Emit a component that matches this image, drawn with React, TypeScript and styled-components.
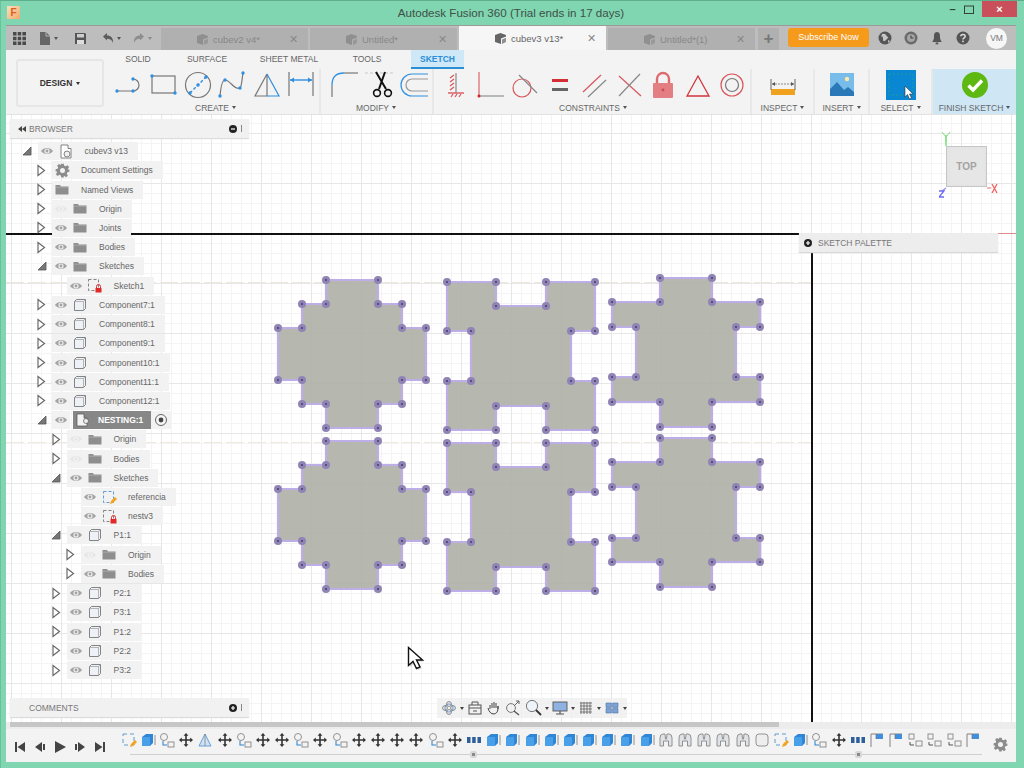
import React from 'react';
import styled, { createGlobalStyle } from 'styled-components';

const GlobalStyle = createGlobalStyle`
  html, body {
    margin: 0;
    padding: 0;
    background: #80d6b0;
  }
  * {
    box-sizing: border-box;
  }
`;

const FONT = `"Liberation Sans", Arial, sans-serif`;

const Window = styled.div`
  width: 1024px;
  height: 768px;
  overflow: hidden;
  display: flex;
  flex-direction: column;
  background: #80d6b0;
  padding: 0 8px 6px 6px;
  border-top: 1px solid #5fae8c;
  box-shadow: inset 1px 0 0 #6cc09b;
  font-family: ${FONT};
  color: #666;
`;

const TitleBar = styled.div`
  height: 24px;
  flex: none;
  display: grid;
  grid-template-columns: 1fr auto 1fr;
  align-items: center;
`;

const AppLogo = styled.div`
  width: 13px;
  height: 13px;
  margin: 0 0 2px 1px;
  background: linear-gradient(135deg, #fbe1c4, #f2a868);
  color: #d9601a;
  font: bold 10px/13px ${FONT};
  text-align: center;
`;

const AppTitle = styled.div`
  font: 11.6px/16px ${FONT};
  color: #3f4f49;
`;

const WindowControls = styled.div`
  display: flex;
  justify-content: flex-end;
  align-items: flex-start;
  height: 24px;
  margin-right: -1px;
`;

const WinButton = styled.div<{ $w: number; $close?: boolean }>`
  width: ${p => p.$w}px;
  height: 16px;
  display: flex;
  align-items: center;
  justify-content: center;
  color: ${p => (p.$close ? '#fff' : '#33413b')};
  background: ${p => (p.$close ? '#c9505a' : 'transparent')};
  font: bold 11px/16px ${FONT};
`;

const AppBar = styled.div`
  height: 25px;
  flex: none;
  display: flex;
  align-items: flex-end;
  background: #bdbdbd;
  border-top: 1px solid #9a9a9a;
`;

const QuickTools = styled.div`
  width: 155px;
  height: 24px;
  flex: none;
  display: flex;
  align-items: center;
`;

const QuickSlot = styled.div<{ $w: number; $pad: number }>`
  width: ${p => p.$w}px;
  padding-left: ${p => p.$pad}px;
  display: flex;
  align-items: center;
  gap: 3px;
`;

const Caret = styled.span<{ $c?: string }>`
  display: inline-block;
  flex: none;
  width: 0;
  height: 0;
  border-left: 2.5px solid transparent;
  border-right: 2.5px solid transparent;
  border-top: 3px solid ${p => p.$c || '#555'};
`;

const DocTab = styled.div<{ $active?: boolean }>`
  width: 147px;
  height: ${p => (p.$active ? 24 : 22)}px;
  margin-right: 2px;
  flex: none;
  display: flex;
  align-items: center;
  padding-left: 35px;
  gap: 4px;
  background: ${p => (p.$active ? '#f6f6f6' : '#b0b0b0')};
  color: ${p => (p.$active ? '#666' : '#878787')};
  font-size: 9.5px;
`;

const TabLabel = styled.span`
  flex: 1;
`;

const TabClose = styled.span`
  width: 19px;
  font-size: 11px;
  color: #888;
`;

const AddTab = styled.div`
  width: 21px;
  height: 22px;
  margin-left: 1px;
  flex: none;
  background: #b0b0b0;
  color: #777;
  font: bold 17px/21px ${FONT};
  text-align: center;
`;

const SubscribeButton = styled.div`
  width: 81px;
  height: 19px;
  margin: 0 0 3px 9px;
  flex: none;
  border-radius: 3px;
  background: #f69a1c;
  color: #fff;
  font-size: 9px;
  line-height: 19px;
  text-align: center;
`;

const AppIcons = styled.div`
  height: 24px;
  flex: 1;
  display: flex;
  align-items: center;
  padding-left: 8px;
  gap: 10px;
`;

const Avatar = styled.div`
  width: 21px;
  height: 21px;
  margin-left: 5px;
  border-radius: 50%;
  background: #f6f6f6;
  color: #777;
  font-size: 8.5px;
  line-height: 21px;
  text-align: center;
`;

const Ribbon = styled.div`
  height: 65px;
  flex: none;
  display: flex;
  background: #f3f3f3;
  border-bottom: 1px solid #e2e2e2;
`;

const DesignColumn = styled.div`
  width: 102px;
  flex: none;
  padding: 9px 0 0 10px;
`;

const DesignButton = styled.div`
  width: 88px;
  height: 48px;
  display: flex;
  align-items: center;
  justify-content: center;
  gap: 4px;
  border: 2px solid #e6e6e6;
  border-radius: 3px;
  color: #333;
  font-size: 8.5px;
  font-weight: bold;
`;

const RibbonBody = styled.div`
  flex: 1;
  display: flex;
  flex-direction: column;
`;

const RibbonTabs = styled.div`
  height: 19px;
  flex: none;
  display: flex;
`;

const RibbonTab = styled.div<{ $w: number; $active?: boolean }>`
  width: ${p => p.$w}px;
  margin-left: ${p => (p.$active ? 9 : 0)}px;
  text-align: center;
  font-size: 8.5px;
  line-height: 18px;
  color: ${p => (p.$active ? '#2b8fd8' : '#666')};
  font-weight: ${p => (p.$active ? 'bold' : 'normal')};
  background: ${p => (p.$active ? '#cfe8f8' : 'transparent')};
  border-bottom: ${p => (p.$active ? '2px solid #2b8fd8' : 'none')};
`;

const RibbonGroups = styled.div`
  flex: 1;
  display: flex;
  margin-left: 4px;
`;

const Group = styled.div<{ $w: number; $pad?: number; $finish?: boolean }>`
  width: ${p => p.$w}px;
  padding-left: ${p => p.$pad || 0}px;
  flex: none;
  display: flex;
  flex-direction: column;
  border-right: ${p => (p.$finish ? 'none' : '2px solid #e8e8e8')};
  background: ${p => (p.$finish ? '#cfe6f5' : 'transparent')};
`;

const ToolRow = styled.div`
  height: 32px;
  display: flex;
`;

const Tool = styled.div<{ $w: number }>`
  width: ${p => p.$w}px;
  flex: none;
  display: flex;
  justify-content: center;
`;

const GroupLabel = styled.div<{ $shift?: number }>`
  margin-left: ${p => p.$shift || 0}px;
  display: flex;
  align-items: center;
  justify-content: center;
  gap: 3px;
  height: 13px;
  font-size: 8.5px;
  color: #666;
`;

const Canvas = styled.div`
  position: relative;
  flex: 1;
  overflow: hidden;
  background-color: #fff;
  background-image:
    linear-gradient(#e7e7e7 1px, transparent 1px),
    linear-gradient(90deg, #e7e7e7 1px, transparent 1px),
    linear-gradient(#f4f4f4 1px, transparent 1px),
    linear-gradient(90deg, #f4f4f4 1px, transparent 1px);
  background-size: 50px 50px, 50px 50px, 10px 10px, 10px 10px;
  background-position: 0 18px, 5px 0, 0 8px, 5px 0;
`;

const SketchLayer = styled.svg`
  position: absolute;
  inset: 0;
  width: 1010px;
  height: 607px;
`;

const BrowserPanel = styled.div`
  position: absolute;
  left: 4px;
  top: 4px;
  bottom: 5px;
  width: 239px;
  display: flex;
  flex-direction: column;
`;

const PanelHeader = styled.div`
  height: 19px;
  flex: none;
  display: flex;
  align-items: center;
  padding-left: 8px;
  background: #f1f1f1;
  box-shadow: 0 1px 1px #dcdcdc;
  font-size: 8.5px;
  color: #777;
`;

const PanelTitle = styled.span<{ $pad: number }>`
  flex: 1;
  padding-left: ${p => p.$pad}px;
`;

const PanelGrip = styled.span`
  width: 8px;
  margin-left: 4px;
  border-left: 1px solid #888;
  height: 7px;
`;

const Tree = styled.div`
  flex: 1;
  margin-left: -4px;
  padding-top: 3.5px;
`;

const TreeRow = styled.div<{ $level: number }>`
  height: 19.22px;
  display: flex;
  align-items: center;
  padding-left: ${p => 10.5 + 14.5 * p.$level}px;
`;

const ArrowSlot = styled.div`
  width: 21px;
  flex: none;
  display: flex;
  justify-content: center;
`;

const Chip = styled.div`
  height: 18px;
  display: flex;
  align-items: center;
  background: #f2f2f2;
  font-size: 8.5px;
  color: #666;
`;

const EyeSlot = styled.div`
  width: 18px;
  flex: none;
  display: flex;
  justify-content: center;
`;

const IconSlot = styled.div`
  width: 20px;
  flex: none;
  display: flex;
  justify-content: center;
`;

const TreeLabel = styled.span`
  padding: 0 10px 0 9px;
  white-space: nowrap;
`;

const ActiveBlock = styled.div`
  height: 18px;
  margin-left: 3px;
  width: 78px;
  display: flex;
  align-items: center;
  background: #878787;
  color: #fff;
  font-size: 8.5px;
  font-weight: bold;
`;

const ActiveLabel = styled.span`
  padding-left: 5px;
`;

const PalettePanel = styled.div`
  position: absolute;
  left: 793px;
  top: 118px;
  width: 199px;
  height: 19px;
  display: flex;
  align-items: center;
  gap: 6px;
  padding-left: 5px;
  background: #ededed;
  box-shadow: 0 1px 1px #d8d8d8;
  font-size: 8.5px;
  color: #777;
`;

const AxisLine = styled.div`
  position: absolute;
  background: #111;
`;

const HAxisBlack = styled(AxisLine)`
  left: 0;
  top: 118px;
  width: 805px;
  height: 2px;
`;

const HAxisRed = styled(AxisLine)`
  left: 805px;
  right: 0;
  top: 118px;
  height: 1px;
  background: #d98b8b;
`;

const VAxisBlack = styled(AxisLine)`
  left: 805px;
  top: 118px;
  bottom: 0;
  width: 2px;
`;

const DashLine = styled.div<{ $top: number }>`
  position: absolute;
  left: 0;
  width: 805px;
  top: ${p => p.$top}px;
  height: 1px;
  background: repeating-linear-gradient(90deg, #efe8dc 0 18px, transparent 18px 22px);
`;

const ViewCube = styled.div`
  position: absolute;
  left: 940px;
  top: 31px;
  width: 41px;
  height: 41px;
  display: flex;
  align-items: center;
  justify-content: center;
  background: #e6e6e6;
  border: 1px solid #c6c6c6;
  box-shadow: 0 0 3px #ddd inset;
  font-size: 10px;
  font-weight: bold;
  color: #a3a3a3;
`;

const CubeAxes = styled.svg`
  position: absolute;
  left: 933px;
  top: 16px;
`;

const NavBar = styled.div`
  position: absolute;
  left: 431px;
  bottom: 4px;
  width: 190px;
  height: 20px;
  display: flex;
  align-items: center;
  padding-left: 4px;
  gap: 3px;
  background: rgba(238, 238, 238, 0.75);
`;

const MouseCursor = styled.svg`
  position: absolute;
  left: 401px;
  top: 531px;
`;

const ScrollRow = styled.div`
  height: 7px;
  flex: none;
  padding-left: 4px;
  background: #ececec;
`;

const ScrollThumb = styled.div`
  width: 769px;
  height: 5px;
  background: #c6c6c6;
`;

const Timeline = styled.div`
  position: relative;
  height: 33px;
  flex: none;
  display: flex;
  align-items: flex-start;
  background: #f3f3f3;
`;

const Transport = styled.div`
  width: 113px;
  height: 33px;
  flex: none;
  display: flex;
  align-items: center;
  padding: 3px 0 0 7px;
  gap: 6px;
`;

const TimelineSteps = styled.div`
  display: flex;
  padding-top: 3px;
`;

const Step = styled.div`
  width: 19.2px;
  flex: none;
  display: flex;
  justify-content: center;
`;

const TrackLine = styled.div`
  position: absolute;
  left: 124px;
  right: 34px;
  top: 25px;
  height: 1px;
  background: #cfcfcf;
`;

const TrackKnob = styled.div<{ $left: number }>`
  position: absolute;
  left: ${p => p.$left}px;
  top: 22px;
  width: 7px;
  height: 7px;
  border-radius: 2px;
  background: #8a8a8a;
  border: 2px solid #d8d8d8;
`;

const TimelineGear = styled.div`
  position: absolute;
  right: 8px;
  top: 8px;
`;

const GREY = '#777';
const BLUE = '#2f8fe0';
const RED = '#d9565c';

const Dot = ({ x, y, c = BLUE }: { x: number; y: number; c?: string }) => <circle cx={x} cy={y} r={1.7} fill={c} />;

const RibbonSvg = ({ children }: { children: React.ReactNode }) => (
  <svg width={32} height={32} viewBox="0 0 32 32" fill="none">
    {children}
  </svg>
);

const ribbonIcons: Record<string, React.ReactNode> = {
  line: (
    <>
      <path d="M4 22H20A6 6 0 0 0 20 10" stroke={GREY} strokeWidth={1.2} />
      <Dot x={4} y={22} /><Dot x={20} y={22} /><Dot x={20} y={10} />
    </>
  ),
  rect: (
    <>
      <rect x={4} y={7} width={23} height={17} stroke={GREY} strokeWidth={1.2} />
      <Dot x={4} y={7} /><Dot x={27} y={24} />
    </>
  ),
  circle: (
    <>
      <circle cx={16} cy={16} r={12.5} stroke={GREY} strokeWidth={1.2} />
      <path d="M8 24L24 8" stroke={BLUE} strokeWidth={1.4} strokeDasharray="3 2" />
      <Dot x={8} y={24} /><Dot x={16} y={16} /><Dot x={24} y={8} />
    </>
  ),
  spline: (
    <>
      <path d="M4 27C5 16 7 11 9 11C14 11 19 22 24 19C26 17 26 9 27 4" stroke={GREY} strokeWidth={1.2} />
      <Dot x={4} y={27} /><Dot x={9} y={11} /><Dot x={24} y={19} /><Dot x={27} y={4} />
    </>
  ),
  triangle: (
    <>
      <path d="M16 5L4 27H16Z" stroke={GREY} strokeWidth={1.2} />
      <path d="M16 5L28 27H16" stroke={BLUE} strokeWidth={1.2} />
    </>
  ),
  dimension: (
    <>
      <path d="M4 3V27M28 3V27" stroke={GREY} strokeWidth={1.2} />
      <path d="M5 11H27" stroke={BLUE} strokeWidth={1.4} />
      <path d="M5 11L9 8.5V13.5ZM27 11L23 8.5V13.5Z" fill={BLUE} />
    </>
  ),
  fillet: (
    <>
      <path d="M2 28V16" stroke={GREY} strokeWidth={1.2} />
      <path d="M2 16Q2 4 14 4" stroke={BLUE} strokeWidth={1.3} />
      <path d="M14 4H28" stroke={GREY} strokeWidth={1.2} />
    </>
  ),
  scissors: (
    <>
      <path d="M1 4H31" stroke="#c9c9c9" strokeWidth={1} strokeDasharray="3 2" />
      <path d="M15 20L21 3M22 20L12 3" stroke="#111" strokeWidth={2} />
      <circle cx={13} cy={24} r={3.4} stroke="#111" strokeWidth={1.6} />
      <circle cx={24} cy={24} r={3.4} stroke="#111" strokeWidth={1.6} />
    </>
  ),
  offset: (
    <>
      <path d="M30 5H14A11 11 0 0 0 14 27H30" stroke={BLUE} strokeWidth={1.2} />
      <path d="M30 10H14A6 6 0 0 0 14 22H30" stroke="#999" strokeWidth={1.2} />
    </>
  ),
  fix: (
    <>
      <path d="M16 4V24" stroke="#888" strokeWidth={1.2} />
      <path d="M14 6L10 9M14 10L10 13M14 14L10 17M14 18L10 21" stroke={RED} strokeWidth={1.3} />
      <path d="M8 24H24" stroke={RED} strokeWidth={1.4} />
      <path d="M11 28L13 25M15 28L17 25M19 28L21 25" stroke={RED} strokeWidth={1.2} />
    </>
  ),
  corner: (
    <>
      <path d="M4 3V27" stroke={RED} strokeWidth={1.1} />
      <path d="M4 27H29" stroke="#888" strokeWidth={1.1} />
      <circle cx={4} cy={27} r={1.5} fill="#d42020" />
    </>
  ),
  tangent: (
    <>
      <circle cx={13} cy={19} r={9} stroke={RED} strokeWidth={1.2} />
      <path d="M10 6L28 24" stroke="#888" strokeWidth={1.2} />
    </>
  ),
  equal: (
    <>
      <rect x={8} y={10} width={16} height={3} fill="#d42e36" />
      <rect x={8} y={19} width={16} height={3} fill="#666" />
    </>
  ),
  parallel: (
    <>
      <path d="M5 23L23 6" stroke={RED} strokeWidth={1.2} />
      <path d="M10 28L28 11" stroke="#888" strokeWidth={1.2} />
    </>
  ),
  cross: (
    <>
      <path d="M6 7L28 27" stroke={RED} strokeWidth={1.2} />
      <path d="M6 27L27 5" stroke="#888" strokeWidth={1.2} />
    </>
  ),
  lock: (
    <>
      <path d="M10 15V10A6 6 0 0 1 22 10V15" stroke="#dc6a6e" strokeWidth={2.4} />
      <rect x={6} y={14} width={20} height={15} rx={1} fill="#e37f83" />
      <circle cx={16} cy={21} r={1.4} fill="#c74d52" />
    </>
  ),
  delta: <path d="M16 7L27 27H5Z" stroke="#d2353c" strokeWidth={1.3} />,
  concentric: (
    <>
      <circle cx={16} cy={16} r={11} stroke={RED} strokeWidth={1.2} />
      <circle cx={16} cy={16} r={6.5} stroke="#777" strokeWidth={1.2} />
    </>
  ),
  ruler: (
    <>
      <rect x={4} y={20} width={24} height={6} fill="#f0a21f" />
      <path d="M4 10V21M28 10V21" stroke="#666" strokeWidth={1} />
      <path d="M5 15H27" stroke="#888" strokeWidth={1} strokeDasharray="2 1" />
      <path d="M5 15L8 13V17ZM27 15L24 13V17Z" fill="#555" />
    </>
  ),
  picture: (
    <>
      <rect x={4} y={4} width={24} height={23} fill="#78bdea" />
      <circle cx={21} cy={10} r={2.2} fill="#ffe9a8" />
      <path d="M4 27V20L11 13L18 21L22 18L28 23V27Z" fill="#2a78b8" />
    </>
  ),
  select: (
    <>
      <rect x={1} y={1} width={30} height={30} fill="#0a87d2" />
      <rect x={4} y={5} width={24} height={21} stroke="#2aa188" strokeWidth={0.8} strokeDasharray="2 2" />
      <path d="M20 17V28L22.5 25.5L24.5 30L26.5 29L24.5 25H28Z" fill="#fff" stroke="#333" strokeWidth={0.6} />
    </>
  ),
  finish: (
    <>
      <circle cx={16} cy={16} r={13} fill="#5eb812" />
      <path d="M9.5 16.5L14 21L23 11.5" stroke="#fff" strokeWidth={3.4} />
    </>
  ),
};

const RibbonIcon = ({ name }: { name: string }) => <RibbonSvg>{ribbonIcons[name]}</RibbonSvg>;

const Small = ({ w = 16, h = 16, children }: { w?: number; h?: number; children: React.ReactNode }) => (
  <svg width={w} height={h} viewBox={`0 0 ${w} ${h}`} fill="none">
    {children}
  </svg>
);

const GridIcon = () => (
  <Small w={13} h={13}>
    <path d="M0 0H3.5V3.5H0ZM4.7 0H8.2V3.5H4.7ZM9.4 0H13V3.5H9.4ZM0 4.7H3.5V8.2H0ZM4.7 4.7H8.2V8.2H4.7ZM9.4 4.7H13V8.2H9.4ZM0 9.4H3.5V13H0ZM4.7 9.4H8.2V13H4.7ZM9.4 9.4H13V13H9.4Z" fill="#4a4a4a" />
  </Small>
);

const FileIcon = () => (
  <Small w={12} h={15}>
    <path d="M1 1H7L11 5V14H1Z" fill="#666" />
    <path d="M7 1V5H11" stroke="#ccc" strokeWidth={0.8} />
  </Small>
);

const SaveIcon = () => (
  <Small w={13} h={13}>
    <path d="M1 1H11L12 2V12H1Z" fill="#555" />
    <rect x={3} y={2} width={7} height={3.5} fill="#ccc" />
    <rect x={3} y={8} width={7} height={4} fill="#ddd" />
  </Small>
);

const UndoIcon = ({ flip, c }: { flip?: boolean; c: string }) => (
  <Small w={12} h={12}>
    <g transform={flip ? 'translate(12 0) scale(-1 1)' : undefined}>
      <path d="M1 4.5L5 1V3.4C9 3.4 11.5 6 11 11C10 8 8 6.8 5 6.8V8.5Z" fill={c} />
    </g>
  </Small>
);

const TabCube = ({ c }: { c: string }) => (
  <Small w={13} h={13}>
    <path d="M1 3L6.5 1L12 3V4.5L7 6.5V12L1 10Z" fill={c} />
    <path d="M8 7.5L12 5.8V10L8 12Z" fill={c} opacity={0.7} />
  </Small>
);

const GlobeIcon = () => (
  <Small>
    <circle cx={8} cy={8} r={6.5} fill="#555" />
    <path d="M5 4Q8 3 9 5T11 7T9 10T6 9T4 7Z" fill="#c6c6c6" />
    <path d="M11 10L13 11L11 13Z" fill="#c6c6c6" />
  </Small>
);

const ClockIcon = () => (
  <Small>
    <circle cx={8} cy={8} r={6.5} fill="#6a6a6a" />
    <circle cx={8} cy={8} r={4} fill="#a6a6a6" />
    <path d="M8 5.5V8H10.5" stroke="#444" strokeWidth={1.1} />
  </Small>
);

const BellIcon = () => (
  <Small>
    <path d="M8 2C5 2 5 5 5 7C5 9.5 4 11 3 12H13C12 11 11 9.5 11 7C11 5 11 2 8 2Z" fill="#555" />
    <rect x={6.7} y={12.5} width={2.6} height={1.8} fill="#555" />
  </Small>
);

const HelpIcon = () => (
  <Small>
    <circle cx={8} cy={8} r={6.5} fill="#555" />
    <path d="M5.8 6.3C5.8 3.8 10.2 3.8 10.2 6.3C10.2 8 8 7.8 8 9.6" stroke="#ddd" strokeWidth={1.5} />
    <rect x={7.2} y={10.6} width={1.6} height={1.6} fill="#ddd" />
  </Small>
);

const EyeIcon = ({ off }: { off?: boolean }) => (
  <Small w={14} h={10}>
    <path d="M1 5C3.5 1 10.5 1 13 5C10.5 9 3.5 9 1 5Z" fill={off ? '#e6e6e6' : '#a3a3a3'} />
    <circle cx={7} cy={5} r={2.6} fill={off ? '#f3f3f3' : '#eee'} />
    <circle cx={7} cy={5} r={1.4} fill={off ? '#e6e6e6' : '#a3a3a3'} />
  </Small>
);

const ClosedArrow = () => (
  <Small w={9} h={13}>
    <path d="M1 1.5L7.5 6.5L1 11.5Z" fill="#fff" stroke="#6a6a6a" strokeWidth={1.2} />
  </Small>
);

const OpenArrow = () => (
  <Small w={10} h={10}>
    <path d="M9 1V9H1Z" fill="#777" stroke="#555" strokeWidth={0.8} />
  </Small>
);

const FolderIcon = () => (
  <Small w={14} h={11}>
    <path d="M0.5 1H5L6 2.5H13.5V10.5H0.5Z" fill="#8e8e8e" />
    <path d="M0.5 3.2H13.5" stroke="#bbb" strokeWidth={0.6} />
  </Small>
);

const GearIcon = ({ size = 14, c = '#8c8c8c' }: { size?: number; c?: string }) => (
  <svg width={size} height={size} viewBox="0 0 24 24">
    <path
      fill={c}
      fillRule="evenodd"
      d="M10 1H14L14.7 4.2L17 5.2L19.8 3.4L22.6 6.2L20.8 9L21.8 11.3L23 10V14L19.8 14.7L18.8 17L20.6 19.8L17.8 22.6L15 20.8L14 21.3L14 23H10L9.3 19.8L7 18.8L4.2 20.6L1.4 17.8L3.2 15L2.2 12.7L1 14V10L4.2 9.3L5.2 7L3.4 4.2L6.2 1.4L9 3.2ZM12 8A4 4 0 1 0 12 16A4 4 0 1 0 12 8Z"
    />
  </svg>
);

const DocIcon = () => (
  <Small w={14} h={15}>
    <path d="M2 1H9V4.5H12V14H2Z" fill="#fff" stroke="#777" strokeWidth={0.9} />
    <circle cx={8} cy={10} r={3} fill="#eee" stroke="#777" strokeWidth={0.9} />
  </Small>
);

const CompIcon = () => (
  <Small w={14} h={14}>
    <path d="M3.5 1.5H12.5V10.5L10.5 12.5H1.5V3.5Z" fill="#eef1f5" stroke="#777" strokeWidth={0.9} />
    <path d="M1.5 3.5H10.5V12.5M10.5 3.5L12.5 1.5" stroke="#999" strokeWidth={0.7} />
  </Small>
);

const SketchIcon = ({ lock, edit }: { lock?: boolean; edit?: boolean }) => (
  <Small w={15} h={15}>
    <rect x={1.5} y={1.5} width={10} height={11} stroke={edit ? '#4f93cf' : '#777'} strokeWidth={0.9} strokeDasharray="3 2" />
    {lock && (
      <>
        <path d="M9.5 10V8.5A2 2 0 0 1 13.5 8.5V10" stroke="#e02a2a" strokeWidth={1} />
        <rect x={8.5} y={10} width={6} height={4.5} fill="#e02a2a" />
      </>
    )}
    {edit && <path d="M8 14L9 11L13 7L15 9L11 13Z" fill="#f2a31f" />}
  </Small>
);

const CompIconDark = () => (
  <Small w={15} h={14}>
    <path d="M1 1H8V5H11V13H1Z" fill="#f3f3f3" stroke="#555" strokeWidth={0.7} />
    <circle cx={10} cy={8} r={2.5} fill="#eee" stroke="#555" strokeWidth={0.7} />
  </Small>
);

const TargetIcon = () => (
  <Small w={14} h={14}>
    <circle cx={7} cy={7} r={5.5} stroke="#666" strokeWidth={1} fill="#f5f5f5" />
    <circle cx={7} cy={7} r={2.4} fill="#444" />
  </Small>
);

type Row = {
  level: number;
  arrow?: 'open' | 'closed';
  eye?: 'on' | 'off';
  icon: 'doc' | 'gear' | 'folder' | 'comp' | 'sketch' | 'sketchEdit' | 'nesting';
  label: string;
  active?: boolean;
};

const rows: Row[] = [
  { level: 0, arrow: 'open', eye: 'on', icon: 'doc', label: 'cubev3 v13' },
  { level: 1, arrow: 'closed', icon: 'gear', label: 'Document Settings' },
  { level: 1, arrow: 'closed', icon: 'folder', label: 'Named Views' },
  { level: 1, arrow: 'closed', eye: 'off', icon: 'folder', label: 'Origin' },
  { level: 1, arrow: 'closed', eye: 'on', icon: 'folder', label: 'Joints' },
  { level: 1, arrow: 'closed', eye: 'on', icon: 'folder', label: 'Bodies' },
  { level: 1, arrow: 'open', eye: 'on', icon: 'folder', label: 'Sketches' },
  { level: 2, eye: 'on', icon: 'sketch', label: 'Sketch1' },
  { level: 1, arrow: 'closed', eye: 'on', icon: 'comp', label: 'Component7:1' },
  { level: 1, arrow: 'closed', eye: 'on', icon: 'comp', label: 'Component8:1' },
  { level: 1, arrow: 'closed', eye: 'on', icon: 'comp', label: 'Component9:1' },
  { level: 1, arrow: 'closed', eye: 'on', icon: 'comp', label: 'Component10:1' },
  { level: 1, arrow: 'closed', eye: 'on', icon: 'comp', label: 'Component11:1' },
  { level: 1, arrow: 'closed', eye: 'on', icon: 'comp', label: 'Component12:1' },
  { level: 1, arrow: 'open', eye: 'on', icon: 'nesting', label: 'NESTING:1', active: true },
  { level: 2, arrow: 'closed', eye: 'off', icon: 'folder', label: 'Origin' },
  { level: 2, arrow: 'closed', eye: 'off', icon: 'folder', label: 'Bodies' },
  { level: 2, arrow: 'open', eye: 'on', icon: 'folder', label: 'Sketches' },
  { level: 3, eye: 'on', icon: 'sketchEdit', label: 'referencia' },
  { level: 3, eye: 'on', icon: 'sketch', label: 'nestv3' },
  { level: 2, arrow: 'open', eye: 'on', icon: 'comp', label: 'P1:1' },
  { level: 3, arrow: 'closed', eye: 'off', icon: 'folder', label: 'Origin' },
  { level: 3, arrow: 'closed', eye: 'on', icon: 'folder', label: 'Bodies' },
  { level: 2, arrow: 'closed', eye: 'on', icon: 'comp', label: 'P2:1' },
  { level: 2, arrow: 'closed', eye: 'on', icon: 'comp', label: 'P3:1' },
  { level: 2, arrow: 'closed', eye: 'on', icon: 'comp', label: 'P1:2' },
  { level: 2, arrow: 'closed', eye: 'on', icon: 'comp', label: 'P2:2' },
  { level: 2, arrow: 'closed', eye: 'on', icon: 'comp', label: 'P3:2' },
];

const rowIcon = (icon: Row['icon']) => {
  switch (icon) {
    case 'doc':
      return <DocIcon />;
    case 'gear':
      return <GearIcon size={15} />;
    case 'folder':
      return <FolderIcon />;
    case 'comp':
      return <CompIcon />;
    case 'sketch':
      return <SketchIcon lock />;
    case 'sketchEdit':
      return <SketchIcon edit />;
    case 'nesting':
      return <CompIconDark />;
  }
};

const shapeA = (x: number[], y: number[]) =>
  [
    [x[2], y[0]], [x[3], y[0]], [x[3], y[1]], [x[4], y[1]], [x[4], y[2]], [x[5], y[2]],
    [x[5], y[3]], [x[4], y[3]], [x[4], y[4]], [x[3], y[4]], [x[3], y[5]], [x[2], y[5]],
    [x[2], y[4]], [x[1], y[4]], [x[1], y[3]], [x[0], y[3]], [x[0], y[2]], [x[1], y[2]],
    [x[1], y[1]], [x[2], y[1]],
  ];

const shapeB = (x: number[], y: number[]) =>
  [
    [x[0], y[0]], [x[2], y[0]], [x[2], y[1]], [x[3], y[1]], [x[3], y[0]], [x[5], y[0]],
    [x[5], y[2]], [x[4], y[2]], [x[4], y[3]], [x[5], y[3]], [x[5], y[5]], [x[3], y[5]],
    [x[3], y[4]], [x[2], y[4]], [x[2], y[5]], [x[0], y[5]], [x[0], y[3]], [x[1], y[3]],
    [x[1], y[2]], [x[0], y[2]],
  ];

// the right hand column is the plus shape with its side arms joined to the top step
const shapeC = (x: number[], y: number[]) =>
  [
    [x[2], y[0]], [x[3], y[0]], [x[3], y[1]], [x[5], y[1]], [x[5], y[2]], [x[4], y[2]],
    [x[4], y[3]], [x[5], y[3]], [x[5], y[4]], [x[3], y[4]], [x[3], y[5]], [x[2], y[5]],
    [x[2], y[4]], [x[0], y[4]], [x[0], y[3]], [x[1], y[3]], [x[1], y[2]], [x[0], y[2]],
    [x[0], y[1]], [x[2], y[1]],
  ];

const xa = [278, 302, 326, 378, 402, 426];
const xb = [447, 471, 496, 546, 571, 595];
const xc = [612, 636, 660, 712, 736, 760];

const shapes = [
  shapeA(xa, [280, 304, 328, 380, 404, 428]),
  shapeB(xb, [282, 306, 331, 381, 406, 430]),
  shapeC(xc, [278, 302, 327, 377, 402, 427]),
  shapeA(xa, [441, 465, 489, 541, 565, 589]),
  shapeB(xb, [443, 467, 492, 542, 567, 591]),
  shapeC(xc, [438, 462, 487, 538, 562, 587]),
];

const stepIcons: Record<string, React.ReactNode> = {
  sketch: (
    <>
      <rect x={2} y={2} width={11} height={11} stroke="#4f93cf" strokeWidth={0.9} strokeDasharray="4 3" />
      <path d="M9 15L10 12L14 8L16 10L12 14Z" fill="#f2a31f" />
    </>
  ),
  box: (
    <>
      <path d="M2 5L6 2H13V11L10 14H2Z" fill="#2f86d6" />
      <path d="M2 5H10V14H2Z" fill="#4aa0e8" />
      <path d="M15 3V13" stroke="#777" strokeWidth={0.8} />
    </>
  ),
  joint: (
    <>
      <circle cx={5} cy={5} r={3.5} stroke="#888" strokeWidth={0.9} />
      <rect x={9} y={10} width={6} height={5} stroke="#888" strokeWidth={0.9} />
      <path d="M4 9V13H8" stroke="#2f86d6" strokeWidth={1.1} />
    </>
  ),
  move: (
    <path
      d="M8 1L10.4 3.8H8.8V7.2H12.2V5.6L15 8L12.2 10.4V8.8H8.8V12.2H10.4L8 15L5.6 12.2H7.2V8.8H3.8V10.4L1 8L3.8 5.6V7.2H7.2V3.8H5.6Z"
      fill="#333"
    />
  ),
  tri: (
    <>
      <path d="M8 2L2 14H14Z" fill="#cfe2f3" stroke="#5a9ad6" strokeWidth={0.9} />
      <path d="M8 2V14" stroke="#777" strokeWidth={0.7} />
    </>
  ),
  ddd: (
    <>
      <rect x={1} y={5} width={3.5} height={6} fill="#2d5f99" />
      <rect x={6.2} y={5} width={3.5} height={6} fill="#2d5f99" />
      <rect x={11.5} y={5} width={3.5} height={6} fill="#2d5f99" />
    </>
  ),
  fil: (
    <>
      <path d="M2 14V6Q2 2 5 2H7L7.5 7L8.5 7L9 2H11Q14 2 14 6V14H10.5V9H5.5V14Z" fill="#dfe2e6" stroke="#888" strokeWidth={0.9} />
    </>
  ),
  round: <rect x={2} y={2} width={12} height={12} rx={3} fill="#eeeeee" stroke="#888" strokeWidth={0.9} />,
  flag: (
    <>
      <path d="M2 15V2H14" stroke="#777" strokeWidth={0.9} />
      <rect x={7} y={2} width={7} height={5} fill="#3f8fdc" />
      <path d="M7 2V7" stroke="#777" strokeWidth={0.7} />
    </>
  ),
  joint2: (
    <>
      <rect x={2} y={2} width={5} height={5} stroke="#888" strokeWidth={0.9} />
      <rect x={9} y={9} width={6} height={5} stroke="#888" strokeWidth={0.9} />
      <path d="M3 10V13H7" stroke="#444" strokeWidth={0.9} />
    </>
  ),
};

const steps = [
  'sketch', 'box', 'joint', 'move', 'tri', 'move', 'joint', 'move', 'move', 'joint', 'move', 'joint', 'move', 'move',
  'move', 'move', 'joint', 'move', 'ddd', 'box', 'box', 'box', 'box', 'box', 'box', 'box', 'box', 'box', 'fil', 'fil',
  'fil', 'fil', 'fil', 'round', 'sketch', 'box', 'joint', 'move', 'ddd', 'flag', 'flag', 'joint2', 'joint2', 'joint2',
  'flag',
];

const TransportIcon = ({ d }: { d: string }) => (
  <Small w={14} h={14}>
    <path d={d} fill="#444" />
  </Small>
);

const App = () => (
  <Window>
    <GlobalStyle />
    <TitleBar>
      <AppLogo>F</AppLogo>
      <AppTitle>Autodesk Fusion 360 (Trial ends in 17 days)</AppTitle>
      <WindowControls>
        <WinButton $w={17}>–</WinButton>
        <WinButton $w={15}>
          <Small w={10} h={9}>
            <rect x={0.5} y={1} width={9} height={7.5} stroke="#33413b" strokeWidth={1} />
          </Small>
        </WinButton>
        <WinButton $w={6} />
        <WinButton $w={35} $close>×</WinButton>
      </WindowControls>
    </TitleBar>

    <AppBar>
      <QuickTools>
        <QuickSlot $w={26} $pad={7}><GridIcon /></QuickSlot>
        <QuickSlot $w={32} $pad={7}><FileIcon /><Caret /></QuickSlot>
        <QuickSlot $w={34} $pad={10}><SaveIcon /></QuickSlot>
        <QuickSlot $w={31} $pad={4}><UndoIcon c="#5c5c5c" /><Caret /></QuickSlot>
        <QuickSlot $w={32} $pad={4}><UndoIcon flip c="#8d8d8d" /><Caret $c="#8a8a8a" /></QuickSlot>
      </QuickTools>
      <DocTab><TabCube c="#8f8f8f" /><TabLabel>cubev2 v4*</TabLabel><TabClose>✕</TabClose></DocTab>
      <DocTab><TabCube c="#8f8f8f" /><TabLabel>Untitled*</TabLabel><TabClose>✕</TabClose></DocTab>
      <DocTab $active><TabCube c="#666" /><TabLabel>cubev3 v13*</TabLabel><TabClose>✕</TabClose></DocTab>
      <DocTab><TabCube c="#8f8f8f" /><TabLabel>Untitled*(1)</TabLabel><TabClose>✕</TabClose></DocTab>
      <AddTab>+</AddTab>
      <SubscribeButton>Subscribe Now</SubscribeButton>
      <AppIcons>
        <GlobeIcon />
        <ClockIcon />
        <BellIcon />
        <HelpIcon />
        <Avatar>VM</Avatar>
      </AppIcons>
    </AppBar>

    <Ribbon>
      <DesignColumn>
        <DesignButton>DESIGN <Caret $c="#333" /></DesignButton>
      </DesignColumn>
      <RibbonBody>
        <RibbonTabs>
          <RibbonTab $w={60}>SOLID</RibbonTab>
          <RibbonTab $w={78}>SURFACE</RibbonTab>
          <RibbonTab $w={86}>SHEET METAL</RibbonTab>
          <RibbonTab $w={70}>TOOLS</RibbonTab>
          <RibbonTab $w={53} $active>SKETCH</RibbonTab>
        </RibbonTabs>
        <RibbonGroups>
          <Group $w={209}>
            <ToolRow>
              {['line', 'rect', 'circle', 'spline', 'triangle', 'dimension'].map(n => (
                <Tool $w={34.4} key={n}><RibbonIcon name={n} /></Tool>
              ))}
            </ToolRow>
            <GroupLabel>CREATE <Caret $c="#555" /></GroupLabel>
          </Group>
          <Group $w={113} $pad={8}>
            <ToolRow>
              {['fillet', 'scissors', 'offset'].map(n => (
                <Tool $w={34} key={n}><RibbonIcon name={n} /></Tool>
              ))}
            </ToolRow>
            <GroupLabel $shift={-9}>MODIFY <Caret $c="#555" /></GroupLabel>
          </Group>
          <Group $w={318} $pad={5}>
            <ToolRow>
              {['fix', 'corner', 'tangent', 'equal', 'parallel', 'cross', 'lock', 'delta', 'concentric'].map(n => (
                <Tool $w={34.5} key={n}><RibbonIcon name={n} /></Tool>
              ))}
            </ToolRow>
            <GroupLabel $shift={-3}>CONSTRAINTS <Caret $c="#555" /></GroupLabel>
          </Group>
          <Group $w={63}>
            <ToolRow><Tool $w={61}><RibbonIcon name="ruler" /></Tool></ToolRow>
            <GroupLabel>INSPECT <Caret $c="#555" /></GroupLabel>
          </Group>
          <Group $w={55}>
            <ToolRow><Tool $w={53}><RibbonIcon name="picture" /></Tool></ToolRow>
            <GroupLabel>INSERT <Caret $c="#555" /></GroupLabel>
          </Group>
          <Group $w={63}>
            <ToolRow><Tool $w={61}><RibbonIcon name="select" /></Tool></ToolRow>
            <GroupLabel>SELECT <Caret $c="#555" /></GroupLabel>
          </Group>
          <Group $w={83} $finish>
            <ToolRow><Tool $w={83}><RibbonIcon name="finish" /></Tool></ToolRow>
            <GroupLabel>FINISH SKETCH <Caret $c="#555" /></GroupLabel>
          </Group>
        </RibbonGroups>
      </RibbonBody>
    </Ribbon>

    <Canvas>
      <DashLine $top={167} />
      <DashLine $top={327} />
      <HAxisBlack />
      <HAxisRed />
      <VAxisBlack />

      <SketchLayer viewBox="6 115 1010 607">
        {shapes.map((pts, i) => (
          <g key={i}>
            <polygon
              points={pts.map(p => p.join(',')).join(' ')}
              fill="rgba(176, 177, 168, 0.92)"
              stroke="#bdaee8"
              strokeWidth={2.2}
            />
            {pts.map(([x, y], j) => (
              <g key={j}>
                <circle cx={x} cy={y} r={4} fill="#9083b5" />
                <circle cx={x} cy={y} r={1} fill="#453d6a" />
              </g>
            ))}
          </g>
        ))}
      </SketchLayer>

      <BrowserPanel>
        <PanelHeader>
          <Small w={8} h={6}>
            <path d="M4 0V6L0 3ZM8 0V6L4 3Z" fill="#444" />
          </Small>
          <PanelTitle $pad={3}>BROWSER</PanelTitle>
          <Small w={8} h={8}>
            <circle cx={4} cy={4} r={4} fill="#222" />
            <rect x={2} y={3.4} width={4} height={1.2} fill="#fff" />
          </Small>
          <PanelGrip />
        </PanelHeader>
        <Tree>
          {rows.map((r, i) => (
            <TreeRow $level={r.level} key={i}>
              <ArrowSlot>
                {r.arrow === 'open' && <OpenArrow />}
                {r.arrow === 'closed' && <ClosedArrow />}
              </ArrowSlot>
              {r.active ? (
                <>
                  <Chip>
                    <EyeSlot><EyeIcon /></EyeSlot>
                  </Chip>
                  <ActiveBlock>
                    <IconSlot>{rowIcon(r.icon)}</IconSlot>
                    <ActiveLabel>{r.label}</ActiveLabel>
                  </ActiveBlock>
                  <Chip>
                    <IconSlot><TargetIcon /></IconSlot>
                  </Chip>
                </>
              ) : (
                <Chip>
                  {r.eye && <EyeSlot><EyeIcon off={r.eye === 'off'} /></EyeSlot>}
                  <IconSlot>{rowIcon(r.icon)}</IconSlot>
                  <TreeLabel>{r.label}</TreeLabel>
                </Chip>
              )}
            </TreeRow>
          ))}
        </Tree>
        <PanelHeader>
          <PanelTitle $pad={11}>COMMENTS</PanelTitle>
          <Small w={8} h={8}>
            <circle cx={4} cy={4} r={4} fill="#222" />
            <path d="M2 3.4H3.4V2H4.6V3.4H6V4.6H4.6V6H3.4V4.6H2Z" fill="#fff" />
          </Small>
          <PanelGrip />
        </PanelHeader>
      </BrowserPanel>

      <PalettePanel>
        <Small w={8} h={8}>
          <circle cx={4} cy={4} r={4} fill="#222" />
          <path d="M2 3.4H3.4V2H4.6V3.4H6V4.6H4.6V6H3.4V4.6H2Z" fill="#fff" />
        </Small>
        SKETCH PALETTE
      </PalettePanel>

      <ViewCube>TOP</ViewCube>
      <CubeAxes width={70} height={70} viewBox="0 0 70 70" fill="none">
        <path d="M7 15V4" stroke="#7de07d" strokeWidth={1.5} />
        <path d="M3 1L7 6L11 1M7 6V11" stroke="#7de07d" strokeWidth={1} />
        <path d="M48 57H52" stroke="#f08080" strokeWidth={1.2} />
        <path d="M53 53L58 62M58 53L53 62" stroke="#f06060" strokeWidth={1.3} />
        <path d="M7 57L3 60" stroke="#8c8cf0" strokeWidth={1.2} />
        <path d="M0 60H5L0 66H5" stroke="#6c6cf0" strokeWidth={1.3} />
      </CubeAxes>

      <NavBar>
        <Small>
          <circle cx={8} cy={8} r={4} stroke="#6aa0d8" strokeWidth={1.2} />
          <circle cx={4} cy={8} r={2.4} stroke="#888" strokeWidth={1} />
          <circle cx={12} cy={8} r={2.4} stroke="#888" strokeWidth={1} />
          <circle cx={8} cy={4} r={2.4} stroke="#888" strokeWidth={1} />
          <circle cx={8} cy={12} r={2.4} stroke="#888" strokeWidth={1} />
        </Small>
        <Caret $c="#444" />
        <Small>
          <rect x={2} y={5} width={12} height={9} stroke="#555" strokeWidth={1} />
          <path d="M2 8H14" stroke="#555" />
          <path d="M5 5V2H11V5M6 11H10" stroke="#555" />
        </Small>
        <Small>
          <path d="M4 9V5M6 8V3M8 8V2M10 8V3M12 9V6C12 10 12 13 8 14C5 14 3 12 2 8" stroke="#444" strokeWidth={1} />
        </Small>
        <Small>
          <circle cx={6} cy={8} r={4.4} stroke="#777" strokeWidth={1} />
          <path d="M9 11L14 15" stroke="#555" strokeWidth={1.4} />
          <path d="M11 1L14 1L14 4M9 6L14 1" stroke="#555" strokeWidth={0.9} />
        </Small>
        <Small w={18} h={18}>
          <circle cx={8} cy={7} r={5.6} fill="#eef4fa" stroke="#777" strokeWidth={1} />
          <path d="M12 11L17 16" stroke="#333" strokeWidth={1.8} />
        </Small>
        <Caret $c="#444" />
        <Small>
          <rect x={1} y={2} width={14} height={9} fill="#90b2e0" stroke="#555" strokeWidth={0.9} />
          <path d="M8 11V14M4 14H12" stroke="#555" strokeWidth={1.2} />
        </Small>
        <Caret $c="#444" />
        <Small>
          <path d="M2 3H14M2 6H14M2 9H14M2 12H14M3 2V14M6 2V14M9 2V14M12 2V14" stroke="#777" strokeWidth={1} />
        </Small>
        <Caret $c="#444" />
        <Small>
          <path d="M2 3H7.4V7.4H2ZM8.6 3H14V7.4H8.6ZM2 8.6H7.4V13H2ZM8.6 8.6H14V13H8.6Z" fill="#7ca2d6" stroke="#4f72a6" strokeWidth={0.6} />
        </Small>
        <Caret $c="#444" />
      </NavBar>

      <MouseCursor width={18} height={26} viewBox="0 0 18 26" fill="none">
        <path d="M3 3V21L7.5 17L11 24L14.5 22.5L11 15.5H17Z" fill="#bbb" opacity={0.6} />
        <path d="M1.5 1.5V19.5L6 15.5L9.5 22.5L13 21L9.5 14H15.5Z" fill="#fff" stroke="#111" strokeWidth={1.4} />
      </MouseCursor>
    </Canvas>

    <ScrollRow>
      <ScrollThumb />
    </ScrollRow>

    <Timeline>
      <Transport>
        <TransportIcon d="M2 2H4V12H2ZM12 2V12L4.5 7Z" />
        <TransportIcon d="M9 2V12L2 7ZM10 4H12V10H10Z" />
        <TransportIcon d="M2 1V13L13 7Z" />
        <TransportIcon d="M5 2V12L12 7ZM2 4H4V10H2Z" />
        <TransportIcon d="M2 2V12L9.5 7ZM10 2H12V12H10Z" />
      </Transport>
      <TimelineSteps>
        {steps.map((s, i) => (
          <Step key={i}>
            <Small>{stepIcons[s]}</Small>
          </Step>
        ))}
      </TimelineSteps>
      <TrackLine />
      <TrackKnob $left={464} />
      <TrackKnob $left={849} />
      <TimelineGear>
        <GearIcon size={15} />
      </TimelineGear>
    </Timeline>
  </Window>
);

export default App;
